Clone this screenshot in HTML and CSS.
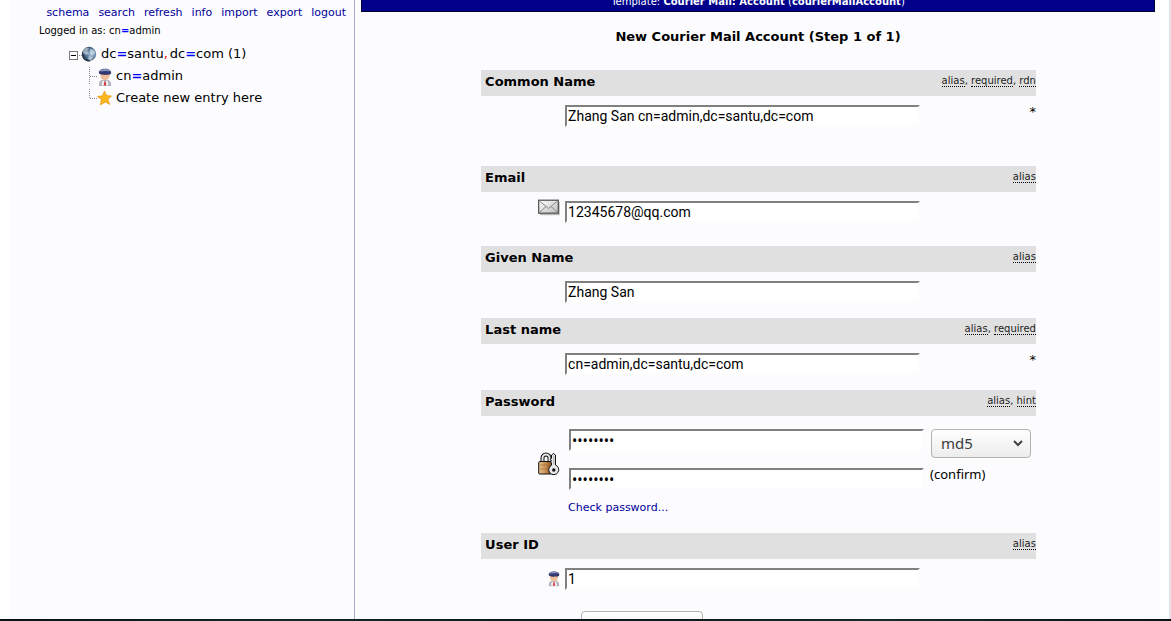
FILE: index.html
```html
<!DOCTYPE html>
<html lang="en">
<head>
<meta charset="utf-8">
<title>New Courier Mail Account</title>
<link rel="stylesheet" href="styles.css">
</head>
<body>
<svg class="defs" aria-hidden="true">
  <defs>
    <linearGradient id="brass"><stop offset="0" stop-color="#e8c493"/><stop offset=".5" stop-color="#c99254"/><stop offset="1" stop-color="#7c4a1f"/></linearGradient>
    <linearGradient id="paper" x2="1" y2="1"><stop offset="0" stop-color="#fff"/><stop offset="1" stop-color="#bbb"/></linearGradient>
    <radialGradient id="earth" cx=".68" cy=".5" r=".7"><stop offset="0" stop-color="#b4cce0"/><stop offset=".5" stop-color="#5b7c9d"/><stop offset="1" stop-color="#172638"/></radialGradient>
    <symbol id="person" viewBox="0 0 14 18">
      <path d="M1.500 17.500c0-4 .8-5.500 5.500-5.500s5.500 1.500 5.500 5.500z" fill="#b9b9c6" stroke="#88889a" stroke-width=".6"/>
      <path d="M4.500 12 7 14l2.500-2 1 5.500h-7z" fill="#eee"/>
      <path d="M6.300 13.500h1.400l.5 4H5.800z" fill="#d8303a"/>
      <circle cx="7" cy="7.500" r="4.600" fill="#f0bd98"/>
      <path d="M1 5.500C0 2.500 3.500.8 7 .8s7 1.700 6 4.700c-.5 1-2 1.500-4 1.300-3 .2-6 .2-8-1.300z" fill="#35386f"/>
      <path d="M1.500 3.500C3 .3 11 .3 12.500 3.500 9 2.500 5 3 1.500 3.500z" fill="#8796bd"/>
    </symbol>
  </defs>
</svg>
<div class="page">
  <aside class="sidebar">
    <nav class="menu">
      <a href="#">schema</a><a href="#">search</a><a href="#">refresh</a><a href="#">info</a><a href="#">import</a><a href="#">export</a><a href="#">logout</a>
    </nav>
    <p class="login">Logged in as: cn<b>=</b>admin</p>
    <ul class="tree">
      <li class="root">
        <svg class="toggle" width="13" height="14" viewBox="0 0 13 14"><rect x=".5" y="3.500" width="8" height="8" fill="#fff" stroke="#777"/><path d="M2 7.500h5" stroke="#000"/><path d="M10 7.500h3" stroke="#888" stroke-dasharray="1 1"/></svg>
        <svg class="globe" width="16" height="16" viewBox="0 0 16 16"><circle cx="8" cy="8" r="7.200" fill="url(#earth)"/><path d="M2 4c2-3 5-3 6-2L6 5l2 2-3 2-3-2zM9 3l4 1 1 3-3 2-2-2zM8 10l4 1-2 4-3-2z" fill="#dce5e9" opacity=".6"/><path d="M1 10a7 7 0 0 0 9 5C5 14 2 12 1 10z" fill="#172638"/></svg>
        <span>dc<b>=</b>santu<i>,</i>dc<b>=</b>com (1)</span>
      </li>
      <li class="leaf">
        <svg class="branch" width="9" height="20" viewBox="0 0 9 20"><path d="M.5 1v18M1 10.500h8" stroke="#888" stroke-dasharray="1 1" fill="none"/></svg>
        <svg class="face" width="14" height="18"><use href="#person"/></svg>
        <span class="name">cn<b>=</b>admin</span>
      </li>
      <li class="leaf">
        <svg class="branch" width="9" height="20" viewBox="0 0 9 20"><path d="M.5 1v10M1 10.500h8" stroke="#888" stroke-dasharray="1 1" fill="none"/></svg>
        <svg class="star" width="15" height="16" viewBox="0 0 15 16"><path d="m7.500 1 2 4.600 5 .5-3.700 3.300 2 5-4.500-2.500-5 3L4.400 9.600.5 6.500l5-.7z" fill="#fdb71c" stroke="#e99a16" stroke-width=".8"/></svg>
        <span>Create new entry here</span>
      </li>
    </ul>
  </aside>
  <main class="content">
    <div class="template"><div>Template: <strong>Courier Mail: Account</strong> (<strong>courierMailAccount</strong>)</div></div>
    <h1>New Courier Mail Account (Step 1 of 1)</h1>
    <form class="entry">
      <div class="head"><label for="cn">Common Name</label><span class="notes"><abbr>alias</abbr>, <abbr>required</abbr>, <abbr>rdn</abbr></span></div>
      <div class="row tall"><span class="icon"></span><input id="cn" type="text" value="Zhang San cn=admin,dc=santu,dc=com"><span class="must">*</span></div>
      <div class="head"><label for="mail">Email</label><span class="notes"><abbr>alias</abbr></span></div>
      <div class="row medium"><span class="icon"><svg width="22" height="17" viewBox="0 0 22 17"><path d="M2 15.500h19V3" fill="none" stroke="#bbb" stroke-width="1.500"/><rect x=".7" y="1.200" width="19.600" height="13" fill="url(#paper)" stroke="#4c4c4c" stroke-width="1.200"/><path d="m2 2.500 8.500 7 8.500-7M2 13l6-5.500M19 13l-6-5.500" fill="none" stroke="#888"/></svg></span><input id="mail" type="text" value="12345678@qq.com"></div>
      <div class="head"><label for="given">Given Name</label><span class="notes"><abbr>alias</abbr></span></div>
      <div class="row"><span class="icon"></span><input id="given" type="text" value="Zhang San"></div>
      <div class="head"><label for="sn">Last name</label><span class="notes"><abbr>alias</abbr>, <abbr>required</abbr></span></div>
      <div class="row"><span class="icon"></span><input id="sn" type="text" value="cn=admin,dc=santu,dc=com"><span class="must">*</span></div>
      <div class="head"><label for="pw">Password</label><span class="notes"><abbr>alias</abbr>, <abbr>hint</abbr></span></div>
      <div class="row secret">
        <span class="icon"><svg width="22" height="24" viewBox="0 0 22 24"><path d="M4.500 11V6a3.500 3.500 0 0 1 7 0v5" fill="none" stroke="#111" stroke-width="4"/><path d="M4.500 11V6a3.500 3.500 0 0 1 7 0v5" fill="none" stroke="#e4e4e4" stroke-width="2"/><rect x=".7" y="9.500" width="13" height="12.500" rx="1" fill="url(#brass)" stroke="#111"/><path d="M2 13h11M2 17h11" stroke="#a66f36" stroke-width=".7"/><path d="M13.500 3 15.500 1.500 17.500 3v10a5 5 0 1 1-4 .2v-2.200l-1-1 1-1.500-1-1 1-1.500z" fill="#e9e9e9" stroke="#111"/><path d="M15.800 3.500v9" stroke="#999" stroke-width=".8"/><circle cx="15.800" cy="18" r="1.700" fill="#111"/></svg></span>
        <div class="pair">
          <input id="pw" type="password" value="password">
          <select aria-label="Password encryption"><option>md5</option></select>
          <input id="pw2" type="password" value="password">
          <label class="confirm" for="pw2">(confirm)</label>
          <a class="check" href="#">Check password...</a>
        </div>
      </div>
      <div class="head"><label for="uid">User ID</label><span class="notes"><abbr>alias</abbr></span></div>
      <div class="row"><span class="icon small"><svg width="12" height="17"><use href="#person"/></svg></span><input id="uid" type="text" value="1"></div>
      <button class="create" type="button">Create Object</button>
    </form>
  </main>
</div>
<div class="desktop"></div>
</body>
</html>
```
FILE: styles.css
```css
* { box-sizing: border-box; }
body {
  margin: 0;
  height: 100vh;
  display: flex;
  flex-direction: column;
  overflow: hidden;
  background: #fff;
  color: #000;
  font: 13px/16px "DejaVu Sans", sans-serif;
}
.defs { position: absolute; width: 0; height: 0; }
.page {
  flex: 1;
  min-height: 0;
  display: flex;
  overflow: hidden;
  padding: 0 11px 0 10px;
  background: linear-gradient(#e4e4e6, #e4e4e6) right / 2px 100% no-repeat #fff;
}
.desktop { height: 2px; background: linear-gradient(90deg, #071015, #12272a, #091419, #16282c, #081116); }
.sidebar { flex: 0 0 345px; background: #fcfcfe; border-right: 1px solid #aaaac8; }
.menu { display: flex; justify-content: flex-end; gap: 9px; padding: 5px 8px 0 0; font-size: 11px; line-height: 15px; }
a { color: #00009c; text-decoration: none; }
.login { margin: 2px 0 0 29px; font-size: 10px; line-height: 17px; }
b { color: #00f; font-weight: bold; }
.tree { list-style: none; margin: 4px 0 0 59px; padding: 0; }
.tree i { margin-right: 2px; color: #f00; font-style: normal; }
.tree li { display: flex; align-items: center; height: 22px; }
.toggle { margin-top: 2px; }
.globe { margin: 0 4px 0 -1px; }
.leaf { padding-left: 20px; }
.face { margin: 2px 4px 0 1px; }
.star { margin-right: 4px; }
.branch { margin-right: -1px; }
.content { flex: 1; padding: 0 5px 0 6px; background: #fcfcfe; }
.template {
  display: flex;
  justify-content: center;
  align-items: flex-end;
  height: 12px;
  padding-bottom: 2px;
  overflow: hidden;
  background: #00008b;
  border: solid #000030;
  border-width: 0 1px 1px;
  color: #fff;
  font-size: 10px;
  line-height: 14px;
}
h1 { margin: 17px 0 25px; font-size: 13px; line-height: 16px; text-align: center; }
.entry { width: 70%; margin: 0 auto; padding-left: 1px; }
.head { display: flex; justify-content: space-between; height: 26px; padding: 4px 0 0 4px; background: #e0e0e0; }
.head label { font-weight: bold; line-height: 16px; }
.notes { font-size: 10px; line-height: 14px; color: #222; }
.notes abbr { display: inline-block; line-height: 11px; border-bottom: 1px dotted #000; }
.row { display: flex; align-items: flex-start; height: 46px; padding-top: 9px; }
.tall { height: 70px; }
.medium { height: 54px; }
.icon { flex: 0 0 84px; display: flex; justify-content: flex-end; padding-right: 5px; }
.icon svg { margin-top: -2px; }
.small svg { margin-top: 2px; }
input {
  width: 64%;
  height: 22px;
  margin: 0;
  padding: 0 1px;
  background: #fff;
  border: 2px solid #fdfdfd;
  border-top-color: #808080;
  border-left-color: #808080;
  color: #000;
  font: 14px/18px Roboto, sans-serif;
}
.must { margin-left: auto; line-height: 14px; }
.secret { height: 117px; padding-top: 13px; }
.secret .icon { padding: 25px 5px 0 0; }
.pair { flex: 1; display: grid; grid-template-columns: 355px 100px; column-gap: 7px; grid-template-rows: 39px 26px 22px; padding-left: 4px; align-items: start; }
.pair input { width: 100%; font: 14px/18px "Noto Sans", sans-serif; }
select {
  height: 29px;
  padding: 0 9px 1px;
  border: 1px solid #b4b2af;
  border-radius: 4px;
  appearance: none;
  background: url("data:image/svg+xml,%3Csvg xmlns='http://www.w3.org/2000/svg' width='10' height='7'%3E%3Cpath d='M1 1l4 4 4-4' fill='none' stroke='%23444' stroke-width='2'/%3E%3C/svg%3E") right 7px center no-repeat, linear-gradient(#fefefe, #ededed);
  color: #3c3c3c;
  font: 15px "Noto Sans", sans-serif;
}
.confirm { font: 13px/12px "Noto Sans", sans-serif; margin-left: -1px; }
.check { grid-column: 1 / 3; font-size: 11px; margin: 6px 0 0 -1px; }
.create {
  display: block;
  width: 122px;
  height: 29px;
  margin: 6px 0 0 100px;
  background: linear-gradient(#fefefe, #ededed);
  border: 1px solid #b4b2af;
  border-radius: 4px;
  color: #3c3c3c;
  font: 14px "Noto Sans", sans-serif;
}
```
